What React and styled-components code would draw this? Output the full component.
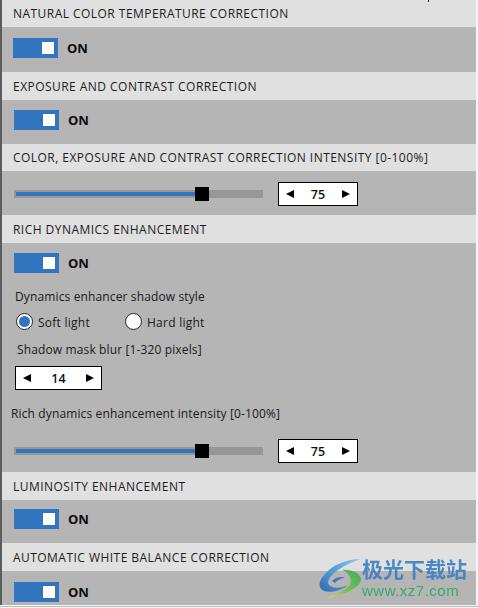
import React from "react";
import styled, { createGlobalStyle } from "styled-components";

const Global = createGlobalStyle`
  html, body { margin: 0; padding: 0; background: #f4f4f4; }
  body { width: 478px; height: 608px; overflow: hidden; font-family: "Open Sans", "Noto Sans", sans-serif; color: #111; }
`;

const Page = styled.div`
  position: relative;
  width: 478px;
  height: 608px;
  overflow: hidden;
`;

const Panel = styled.div`
  width: 474px;
  height: 605px;
  border-left: 2px solid #5c5c5c;
  background: #b5b5b5;
  overflow: hidden;
`;

const FootLine = styled.div`
  height: 1px;
  margin-top: 1px;
  background: #bdbdbd;
`;

const Speck = styled.div`
  position: absolute;
  left: 428px;
  top: 0;
  width: 1px;
  height: 2px;
  background: #222;
`;

const Header = styled.div`
  height: ${(p) => p.$h || 28}px;
  background: #e0e0e0;
  padding-left: 11px;
  font-size: 12px;
  line-height: ${(p) => p.$lh || 29}px;
  letter-spacing: 0.46px;
  color: #1c1c1c;
  white-space: nowrap;
`;

const Body = styled.div`
  height: ${(p) => p.$h}px;
  padding: ${(p) => p.$top || 0}px 0 0 ${(p) => p.$left ?? 12}px;
  box-sizing: border-box;
`;

const ToggleRow = styled.div`
  display: flex;
  align-items: center;
  gap: 9px;
`;

const Toggle = styled.div`
  width: 45px;
  height: 20px;
  background: #3075bd;
  display: flex;
  align-items: center;
  justify-content: flex-end;
  padding-right: 4px;
  box-sizing: border-box;
`;

const Knob = styled.div`
  width: 12px;
  height: 12px;
  background: #fff;
`;

const OnLabel = styled.span`
  font-size: 13px;
  font-weight: 700;
  color: #0c0c0c;
`;

const SliderRow = styled.div`
  display: flex;
  align-items: center;
  gap: 15px;
`;

const Track = styled.div`
  position: relative;
  width: 249px;
  height: 8px;
  background: #979797;
`;

const Fill = styled.div`
  position: absolute;
  left: 2px;
  top: 2px;
  height: 4px;
  background: #3075bd;
`;

const Thumb = styled.div`
  position: absolute;
  top: -3px;
  width: 14px;
  height: 14px;
  background: #000;
`;

const Spin = styled.div`
  width: ${(p) => p.$w}px;
  height: 24px;
  box-sizing: border-box;
  background: #fff;
  border: 1px solid #000;
  display: flex;
  align-items: center;
  justify-content: space-between;
  padding: 0 7px;
  font-size: 12.5px;
  font-weight: 600;
  color: #111;
`;

const Arrow = styled.svg`
  width: 8px;
  height: 8px;
  display: block;
  fill: #000;
`;

const Label = styled.div`
  font-size: 12px;
  line-height: 16px;
  letter-spacing: 0.13px;
  color: #1a1a1a;
  margin-left: ${(p) => p.$left || 0}px;
  margin-top: ${(p) => p.$top || 0}px;
  white-space: nowrap;
`;

const RadioRow = styled.div`
  display: flex;
  align-items: flex-start;
  margin: 8px 0 0 2px;
`;

const Radio = styled.div`
  width: 17px;
  height: 17px;
  box-sizing: border-box;
  border-radius: 50%;
  border: 1px solid #222;
  background: #fff;
  display: flex;
  align-items: center;
  justify-content: center;
  margin-right: 5px;
  &::after {
    content: "";
    width: 11px;
    height: 11px;
    border-radius: 50%;
    background: ${(p) => (p.$on ? "#3075bd" : "transparent")};
  }
`;

const RadioText = styled.span`
  font-size: 12px;
  line-height: 17px;
  margin-top: 1px;
  letter-spacing: 0.25px;
  color: #1a1a1a;
  width: ${(p) => p.$w}px;
`;

const Watermark = styled.div`
  position: absolute;
  left: 318px;
  top: 556px;
  display: flex;
  align-items: flex-start;
  filter: blur(0.4px);
`;

const WmText = styled.div`
  display: flex;
  flex-direction: column;
  align-items: flex-start;
`;

const WmTitle = styled.div`
  font-family: "Noto Sans CJK SC", sans-serif;
  font-weight: 700;
  font-size: 21px;
  line-height: 25px;
  height: 25px;
  color: #3d7fc4;
  opacity: 0.9;
`;

const WmUrl = styled.div`
  font-family: "Liberation Sans", sans-serif;
  font-size: 15px;
  line-height: 16px;
  margin-top: 2px;
  letter-spacing: 0.5px;
  color: #3aa868;
`;

const SpinWrap = styled.div`
  margin: 8px 0 0 1px;
`;

const SliderGap = styled.div`
  margin-top: 17px;
`;

const Left = () => (
  <Arrow viewBox="0 0 8 8"><polygon points="0,4 8,0 8,8" /></Arrow>
);
const Right = () => (
  <Arrow viewBox="0 0 8 8"><polygon points="8,4 0,0 0,8" /></Arrow>
);

const OnToggle = () => (
  <ToggleRow>
    <Toggle><Knob /></Toggle>
    <OnLabel>ON</OnLabel>
  </ToggleRow>
);

const Spinner = ({ w, value }) => (
  <Spin $w={w}><Left /><span>{value}</span><Right /></Spin>
);

const Slider = () => (
  <SliderRow>
    <Track>
      <Fill style={{ width: 181 }} />
      <Thumb style={{ left: 181 }} />
    </Track>
    <Spinner w={80} value={75} />
  </SliderRow>
);

const Logo = () => (
  <svg width="44" height="44" viewBox="0 0 44 44">
    <defs>
      <linearGradient id="wmBlue" x1="1" y1="0" x2="0" y2="1">
        <stop offset="0" stopColor="#8cc8e8" />
        <stop offset="0.45" stopColor="#56a4dc" />
        <stop offset="1" stopColor="#3468b4" />
      </linearGradient>
      <linearGradient id="wmGreen" x1="1" y1="0" x2="0" y2="1">
        <stop offset="0" stopColor="#3fae62" />
        <stop offset="0.6" stopColor="#7dc04e" />
        <stop offset="1" stopColor="#ecdd4c" />
      </linearGradient>
    </defs>
    <path d="M42 3C30 3 15 8 6 19C0 26 0 32 6 35C13 37 24 35 30 29C24 32 15 33 11 29C8 25 13 19 20 14C27 9 35 6 42 3Z" fill="url(#wmBlue)" />
    <path d="M24 14C33 13 42 17 43 23C43 31 28 39 8 42C20 38 33 32 33 25C33 20 29 16 24 14Z" fill="url(#wmGreen)" />
    <path d="M14 25C18 21 24 20 27 22C23 22 19 24 17 27Z" fill="#3f78bd" />
  </svg>
);

export default function App() {
  return (
    <Page>
      <Global />
      <Panel>
        <Header $h={27} $lh={27}>NATURAL COLOR TEMPERATURE CORRECTION</Header>
        <Body $h={45} $top={11} $left={11}><OnToggle /></Body>
        <Header>EXPOSURE AND CONTRAST CORRECTION</Header>
        <Body $h={44} $top={10}><OnToggle /></Body>
        <Header $h={27} $lh={27}>COLOR, EXPOSURE AND CONTRAST CORRECTION INTENSITY [0-100%]</Header>
        <Body $h={44} $top={11}><Slider /></Body>
        <Header>RICH DYNAMICS ENHANCEMENT</Header>
        <Body $h={229} $top={10}>
          <OnToggle />
          <Label $left={1} $top={16}>Dynamics enhancer shadow style</Label>
          <RadioRow>
            <Radio $on />
            <RadioText $w={87}>Soft light</RadioText>
            <Radio />
            <RadioText $w={70}>Hard light</RadioText>
          </RadioRow>
          <Label $left={3} $top={11}>Shadow mask blur [1-320 pixels]</Label>
          <SpinWrap><Spinner w={87} value={14} /></SpinWrap>
          <Label $left={-3} $top={16}>Rich dynamics enhancement intensity [0-100%]</Label>
          <SliderGap><Slider /></SliderGap>
        </Body>
        <Header>LUMINOSITY ENHANCEMENT</Header>
        <Body $h={43} $top={9}><OnToggle /></Body>
        <Header>AUTOMATIC WHITE BALANCE CORRECTION</Header>
        <Body $h={33} $top={11}><OnToggle /></Body>
      </Panel>
      <FootLine />
      <Speck />
      <Watermark>
        <Logo />
        <WmText>
          <WmTitle>极光下载站</WmTitle>
          <WmUrl>www.xz7.com</WmUrl>
        </WmText>
      </Watermark>
    </Page>
  );
}
